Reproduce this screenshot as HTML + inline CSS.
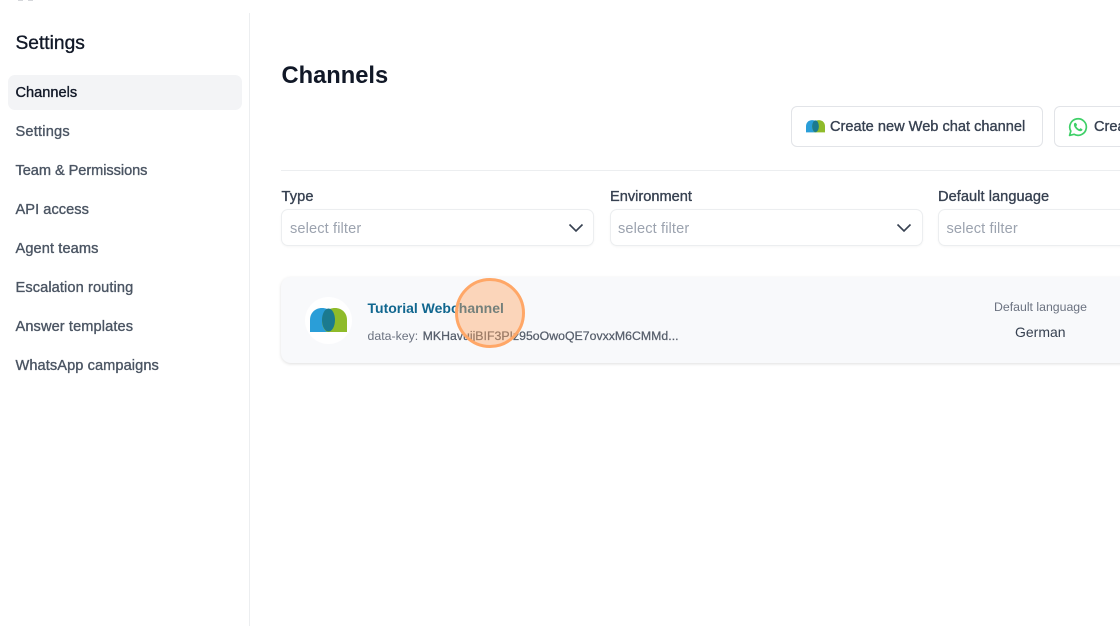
<!DOCTYPE html>
<html><head><meta charset="utf-8">
<style>
html,body{margin:0;padding:0;background:#fff;}
body{width:1120px;height:626px;overflow:hidden;position:relative;font-family:"Liberation Sans",sans-serif;color:#374151;}
.a{position:absolute;white-space:nowrap;}
.nav{left:15.5px;font-size:14.6px;font-weight:400;color:#4b5563;line-height:20px;-webkit-text-stroke:.35px #4b5563;}
.lab{font-size:14.6px;color:#374151;line-height:20px;-webkit-text-stroke:.35px #374151;}
.sel{top:209px;height:35px;border:1px solid #eceef0;border-radius:7px;box-shadow:0 1px 2px rgba(0,0,0,.04);background:#fff;}
.ph{top:220px;font-size:14.6px;color:#9ca3af;line-height:18px;letter-spacing:.12px;}
</style></head><body>
<div class="a" style="left:18px;top:0;width:5px;height:1px;background:#d5d7db"></div>
<div class="a" style="left:28px;top:0;width:5px;height:1px;background:#d5d7db"></div>
<div class="a" style="left:249px;top:13px;width:1px;height:613px;background:#eceef0"></div>
<div class="a" style="left:15.5px;top:33px;font-size:19.2px;line-height:22px;color:#111827;-webkit-text-stroke:.35px #111827">Settings</div>
<div class="a" style="left:8px;top:75px;width:234px;height:35px;background:#f3f4f6;border-radius:7px"></div>
<div class="a nav" style="top:82.500px;color:#111827;-webkit-text-stroke:.35px #111827">Channels</div>
<div class="a nav" style="top:121.500px;letter-spacing:.2px">Settings</div>
<div class="a nav" style="top:160.500px;letter-spacing:-.06px">Team &amp; Permissions</div>
<div class="a nav" style="top:199.500px;letter-spacing:.05px">API access</div>
<div class="a nav" style="top:238.500px;letter-spacing:.1px">Agent teams</div>
<div class="a nav" style="top:277.500px;letter-spacing:.1px">Escalation routing</div>
<div class="a nav" style="top:316.500px;letter-spacing:.1px">Answer templates</div>
<div class="a nav" style="top:356px;letter-spacing:.08px">WhatsApp campaigns</div>

<div class="a" style="left:281.5px;top:60.500px;font-size:23.7px;font-weight:700;line-height:30px;color:#111827">Channels</div>

<div class="a" style="left:791px;top:106px;width:250px;height:39px;border:1px solid #e2e4e8;border-radius:6px;background:#fff"></div>
<svg class="a" style="left:806px;top:120px" width="19" height="12.500" viewBox="0 0 37 24">
<path d="M0 24V12C0 5 5 0 12 0c7 0 13 5 13 12 0 5-1 9-5 12z" fill="#2a9ed8"/>
<path d="M37 24V12C37 5 32 0 25 0c-7 0-13 5-13 12 0 5 1 9 5 12z" fill="#8fbb2a"/>
<ellipse cx="18.500" cy="12" rx="6.500" ry="11.500" fill="#1b7a8f"/>
</svg>
<div class="a" style="left:830px;top:116.500px;font-size:14.6px;line-height:20px;color:#374151;-webkit-text-stroke:.35px #374151">Create new Web chat channel</div>
<div class="a" style="left:1054px;top:106px;width:90px;height:39px;border:1px solid #e2e4e8;border-radius:6px;background:#fff"></div>
<svg class="a" style="left:1068px;top:117px" width="20" height="20" viewBox="0 0 20 20" fill="none">
<path d="M1.600 18.400l1.200-4.300A8.300 8.300 0 1 1 6 17.300z" stroke="#3fd068" stroke-width="1.700" stroke-linejoin="round"/>
<path d="M7.200 5.800c-.5 0-1.300.7-1.300 2 0 2.600 3.500 6.400 6.500 6.400 1.400 0 2.200-1 2.100-1.700 0-.3-1.700-1.300-2.100-1.300-.4 0-.7.900-1.100.9-.8 0-3-2.200-3-2.900 0-.4.800-.8.800-1.200 0-.4-1-2.200-1.900-2.200z" fill="#3fd068"/>
</svg>
<div class="a" style="left:1094px;top:116.500px;font-size:14.6px;line-height:20px;color:#374151;-webkit-text-stroke:.35px #374151">Create</div>

<div class="a" style="left:281px;top:170px;width:839px;height:1px;background:#eceef0"></div>

<div class="a lab" style="left:281.5px;top:186.500px;letter-spacing:.1px">Type</div>
<div class="a lab" style="left:610px;top:186.500px">Environment</div>
<div class="a lab" style="left:938px;top:186.500px;letter-spacing:.05px">Default language</div>

<div class="a sel" style="left:281px;width:311px"></div>
<div class="a sel" style="left:610px;width:311px"></div>
<div class="a sel" style="left:938px;width:200px"></div>
<div class="a ph" style="left:290px">select filter</div>
<div class="a ph" style="left:618px">select filter</div>
<div class="a ph" style="left:946.500px">select filter</div>
<svg class="a" style="left:568px;top:223px" width="16" height="10" viewBox="0 0 16 10" fill="none"><path d="M1.500 1.500L8 8l6.500-6.500" stroke="#374151" stroke-width="1.600"/></svg>
<svg class="a" style="left:896px;top:223px" width="16" height="10" viewBox="0 0 16 10" fill="none"><path d="M1.500 1.500L8 8l6.500-6.500" stroke="#374151" stroke-width="1.600"/></svg>

<div class="a" style="left:281px;top:277px;width:860px;height:86px;background:#f8f9fb;border-radius:10px;box-shadow:0 1px 3px rgba(0,0,0,.13)"></div>
<div class="a" style="left:305px;top:297px;width:47px;height:47px;border-radius:50%;background:#fff"></div>
<svg class="a" style="left:310px;top:308px" width="37" height="24" viewBox="0 0 37 24">
<path d="M0 24V12C0 5 5 0 12 0c7 0 13 5 13 12 0 5-1 9-5 12z" fill="#2a9ed8"/>
<path d="M37 24V12C37 5 32 0 25 0c-7 0-13 5-13 12 0 5 1 9 5 12z" fill="#8fbb2a"/>
<ellipse cx="18.500" cy="12" rx="6.500" ry="11.500" fill="#1b7a8f"/>
</svg>
<div class="a" style="left:367.500px;top:299px;font-size:14px;font-weight:700;line-height:19px;color:#11678f">Tutorial Webchannel</div>
<div class="a" style="left:367.500px;top:327.500px;font-size:12.300px;line-height:17px;color:#6b7280;letter-spacing:.01px">data-key: <span style="color:#565e6b;-webkit-text-stroke:.25px #565e6b;margin-left:1px">MKHavuijBIF3PIz95oOwoQE7ovxxM6CMMd...</span></div>
<div class="a" style="left:994px;top:298.500px;font-size:12.300px;line-height:17px;color:#6b7280">Default language</div>
<div class="a" style="left:1015px;top:323px;font-size:14px;line-height:18px;color:#374151">German</div>

<div class="a" style="left:455px;top:278px;width:64px;height:64px;border:3px solid #ffa767;border-radius:50%;background:rgba(255,165,95,.42)"></div>
</body></html>
